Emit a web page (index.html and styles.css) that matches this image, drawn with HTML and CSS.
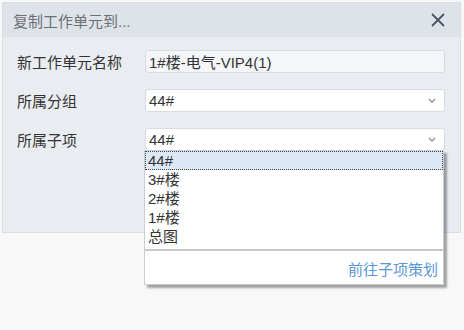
FILE: index.html
```html
<!DOCTYPE html>
<html lang="zh">
<head>
    <meta charset="UTF-8">
    <title>复制工作单元到...</title>
    <link rel="stylesheet" href="styles.css">
</head>
<body>
    <div class="page">
        <div class="dialog">
            <div class="dialog-head">
                <span class="title">复制工作单元到...</span>
                <svg class="close" width="14" height="14" viewBox="0 0 14 14">
                    <path d="M1 1 L13 13 M13 1 L1 13" stroke="#4a5561" stroke-width="1.8" fill="none"/>
                </svg>
            </div>
            <div class="dialog-body">
                <div class="row">
                    <label>新工作单元名称</label>
                    <div class="field field-input">1#楼-电气-VIP4(1)</div>
                </div>
                <div class="row">
                    <label>所属分组</label>
                    <div class="field field-select">
                        <span>44#</span>
                        <svg width="8" height="5" viewBox="0 0 8 5"><path d="M1 1 L4 4 L7 1" stroke="#8a9099" stroke-width="1.3" fill="none"/></svg>
                    </div>
                </div>
                <div class="row">
                    <label>所属子项</label>
                    <div class="field field-select">
                        <span>44#</span>
                        <svg width="8" height="5" viewBox="0 0 8 5"><path d="M1 1 L4 4 L7 1" stroke="#8a9099" stroke-width="1.3" fill="none"/></svg>
                    </div>
                </div>
            </div>
        </div>

        <!-- 下拉列表浮在对话框上面 -->
        <div class="dropdown">
            <ul class="options">
                <li class="active">44#</li>
                <li>3#楼</li>
                <li>2#楼</li>
                <li>1#楼</li>
                <li>总图</li>
            </ul>
            <div class="dropdown-foot">
                <a href="#">前往子项策划</a>
            </div>
        </div>
    </div>
</body>
</html>
```

FILE: styles.css
```css
* {
    margin: 0;
    padding: 0;
    box-sizing: border-box;
}

html,
body {
    height: 100%;
}

body {
    background-color: #f8f8f8;
    font-family: "Liberation Sans", "Noto Sans CJK SC", sans-serif;
    font-size: 15px;
    color: #333;
}

.page {
    position: relative;
    height: 330px;
    padding: 2px 2px 0 2px;
}

.dialog {
    width: 459px;
    height: 231px;
    background-color: #e9edf2;
    border: 1px solid #d9dee5;
}

.dialog-head {
    height: 34px;
    background-color: #dee3ea;
    display: flex;
    align-items: center;
    justify-content: space-between;
    padding: 0 15px 0 10px;
}

.dialog-head .title {
    color: #6b6f75;
    font-size: 15px;
}

.dialog-body {
    padding: 13px 15px 0 14px;
}

.row {
    display: flex;
    align-items: center;
    height: 23px;
    margin-bottom: 16px;
}

.row label {
    width: 128px;
    color: #333;
}

.field {
    flex: 1;
    height: 23px;
    border: 1px solid #d6dbe3;
    border-radius: 3px;
    padding: 0 8px 0 3px;
    display: flex;
    align-items: center;
    color: #333;
}

.field-input {
    background-color: #f4f6f9;
}

.field-select {
    background-color: #fff;
    justify-content: space-between;
}

.dropdown {
    position: absolute;
    z-index: 10;
    top: 150px;
    left: 144px;
    width: 300px;
    height: 135px;
    background-color: #fff;
    border: 1px solid #c9ced6;
    box-shadow: 3px 3px 2px rgba(0, 0, 0, 0.35);
}

.options {
    list-style: none;
}

.options li {
    height: 19px;
    line-height: 19px;
    padding-left: 3px;
    color: #333;
}

.options li.active {
    background-color: #dce8f6;
    outline: 1px dotted #444;
    outline-offset: -1px;
}

.dropdown-foot {
    margin-top: 3px;
    border-top: 2px solid #c9c9c9;
    height: 34px;
    display: flex;
    align-items: flex-end;
    justify-content: flex-end;
    padding: 0 5px 4px 0;
}

.dropdown-foot a {
    color: #5a97d8;
    text-decoration: none;
}
```
